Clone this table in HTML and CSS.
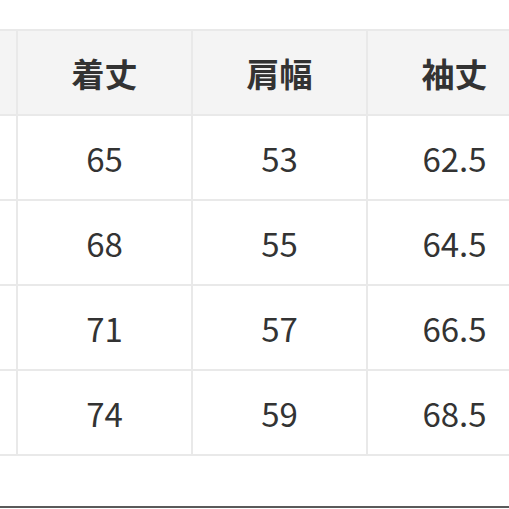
FILE: index.html
```html
<!DOCTYPE html>
<html lang="ja">
<head>
<meta charset="utf-8">
<link rel="stylesheet" href="styles.css">
</head>
<body>
<div class="viewport">
  <table class="size-table">
    <colgroup>
      <col class="c"><col class="c"><col class="c"><col class="c">
    </colgroup>
    <thead>
      <tr><th></th><th>着丈</th><th>肩幅</th><th>袖丈</th></tr>
    </thead>
    <tbody>
      <tr><td></td><td>65</td><td>53</td><td>62.5</td></tr>
      <tr><td></td><td>68</td><td>55</td><td>64.5</td></tr>
      <tr><td></td><td>71</td><td>57</td><td>66.5</td></tr>
      <tr><td></td><td>74</td><td>59</td><td>68.5</td></tr>
    </tbody>
  </table>
  <div class="rule"></div>
</div>
</body>
</html>
```

FILE: styles.css
```css
html, body {
  margin: 0;
  padding: 0;
  background: #ffffff;
  overflow: hidden;
  width: 509px;
  height: 509px;
}
.viewport {
  width: 509px;
  height: 509px;
  overflow: hidden;
  padding-top: 29px;
  box-sizing: border-box;
}
.size-table {
  border-collapse: collapse;
  table-layout: fixed;
  width: 700px;
  margin-left: -159px;
  font-family: "Noto Sans CJK JP", "Noto Sans", sans-serif;
  color: #333333;
}
.size-table .c {
  width: 175px;
}
.size-table th,
.size-table td {
  border: 2px solid #e9e9e9;
  height: 85px;
  padding: 0;
  text-align: center;
  vertical-align: middle;
  font-size: 33px;
  box-sizing: border-box;
}
.size-table th {
  background: #f4f4f4;
  font-weight: 700;
}
.size-table td {
  font-weight: 400;
}
.rule {
  margin-top: 50px;
  height: 2px;
  background: #5a5a5a;
}
```
